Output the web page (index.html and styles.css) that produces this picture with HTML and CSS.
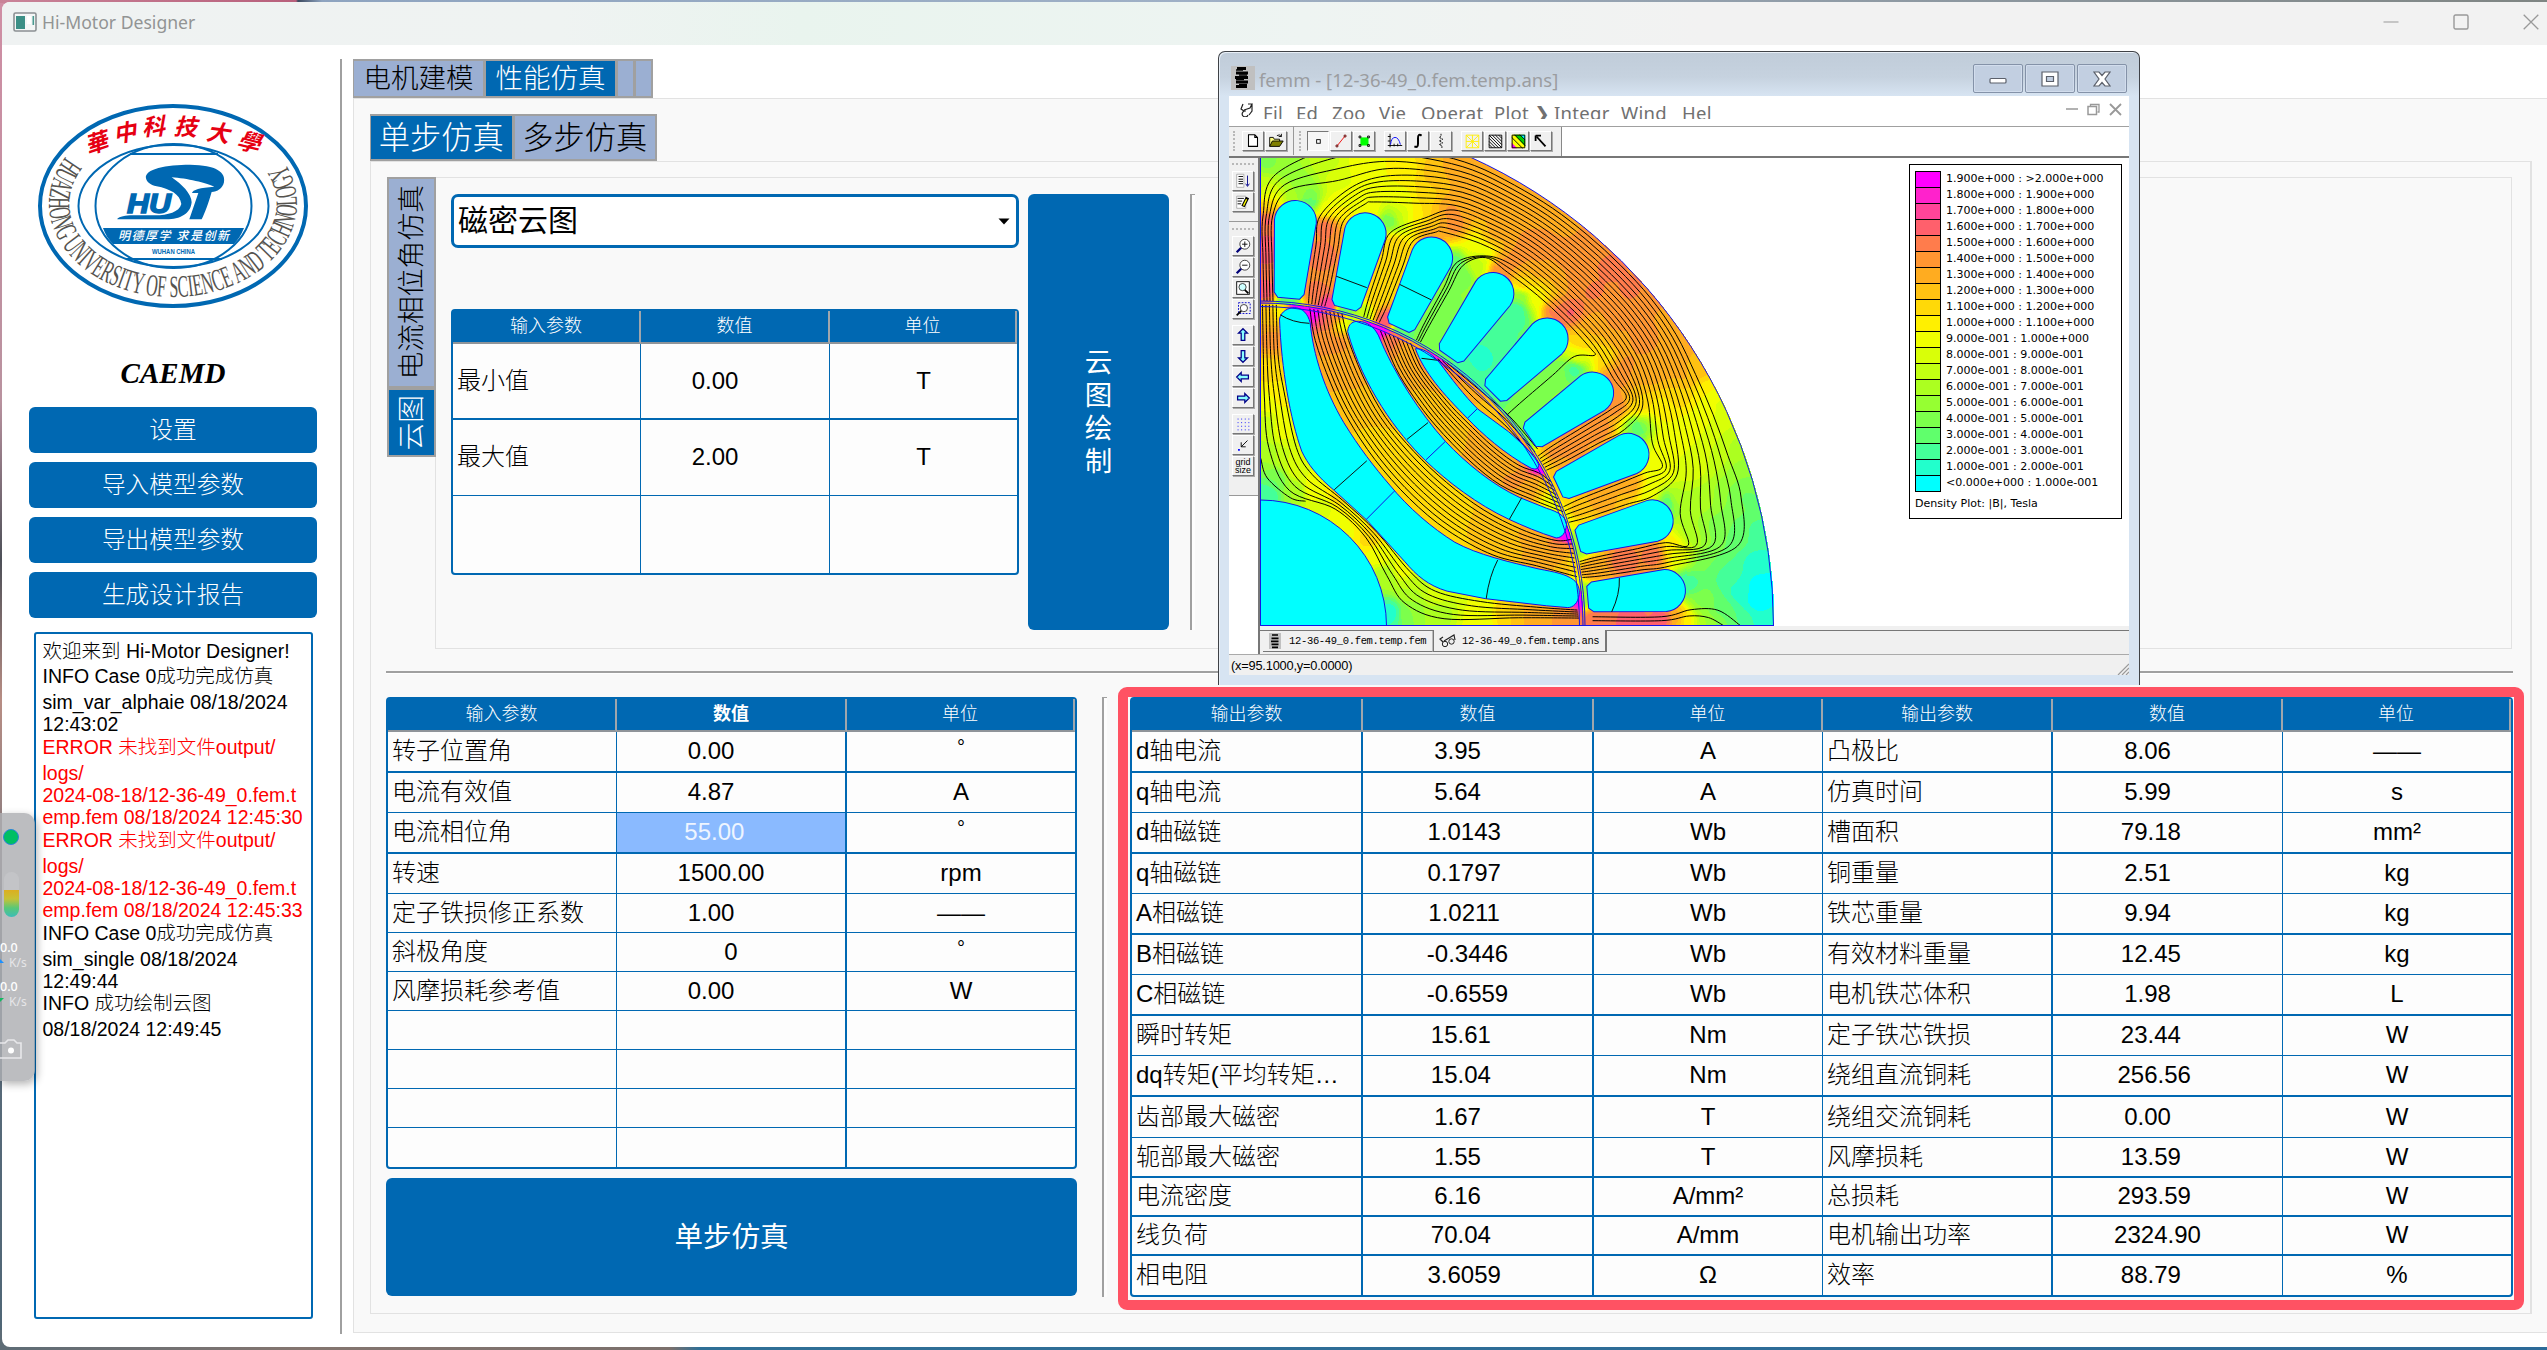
FILE: index.html
```html
<!DOCTYPE html>
<html lang="zh-CN">
<head>
<meta charset="utf-8">
<title>Hi-Motor Designer</title>
<link rel="stylesheet" href="styles.css">
</head>
<body>
<div class="window">
  <header class="titlebar">
    <svg class="app-icon" width="24" height="20" viewBox="0 0 24 20"><rect x="1" y="1" width="22" height="18" rx="1.5" fill="#f4f6f6" stroke="#8a8f92" stroke-width="1.6"/><rect x="3" y="4" width="9" height="13" fill="#3c8f86"/><rect x="14" y="4" width="4" height="8" fill="#fff"/><rect x="19.5" y="4" width="1.6" height="9" fill="#4a9a90"/></svg>
    <span class="app-title">Hi-Motor Designer</span>
    <div class="win-controls">
      <svg width="16" height="16" viewBox="0 0 16 16"><path d="M.5 8H15.5" stroke="#999"/></svg>
      <svg width="16" height="16" viewBox="0 0 16 16"><rect x="1" y="1" width="14" height="14" rx="1.5" fill="none" stroke="#999" stroke-width="1.4"/></svg>
      <svg width="16" height="16" viewBox="0 0 16 16"><path d="M.7 .7L15.3 15.3M15.3 .7L.7 15.3" stroke="#999" stroke-width="1.3"/></svg>
    </div>
  </header>
  <div class="content">
    <aside class="sidebar">
      <svg class="logo" width="272" height="206" viewBox="-1 -1 272 206">
        <defs><path id="ring" d="M29,51 A124,93.500 0 1 0 241,51"/></defs>
        <ellipse cx="135" cy="102" rx="133" ry="100" fill="#fff" stroke="#0068b2" stroke-width="4"/>
        <text class="ring-text"><textPath href="#ring" startOffset="2" textLength="436" lengthAdjust="spacingAndGlyphs">HUAZHONG UNIVERSITY OF SCIENCE AND TECHNOLOGY</textPath></text>
        <g class="ring-cn">
          <text transform="translate(61 47) rotate(-18) skewX(-14)">華</text>
          <text transform="translate(88 37) rotate(-10) skewX(-14)">中</text>
          <text transform="translate(116 31) rotate(-4) skewX(-14)">科</text>
          <text transform="translate(147 31) rotate(3) skewX(-14)">技</text>
          <text transform="translate(179 37) rotate(8) skewX(-14)">大</text>
          <text transform="translate(209 46) rotate(14) skewX(-14)">學</text>
        </g>
        <g fill="none" stroke="#0068b2" stroke-width="2">
          <ellipse cx="135.500" cy="102" rx="95" ry="61"/><ellipse cx="135.500" cy="102" rx="78" ry="62"/>
          <path d="M92 50H180M88 155H184"/>
        </g>
        <path d="M65 124H206C203 131 200 136 196 140H75C70 135 67 130 65 124Z" fill="#0068b2"/>
        <text x="80" y="136" class="motto" textLength="111">明德厚学 求是创新</text>
        <text x="114" y="150" class="city" textLength="43" lengthAdjust="spacingAndGlyphs">WUHAN CHINA</text>
        <path transform="translate(-18 -15) scale(.3333)" d="M378 268C372 240 440 227 510 227C590 228 618 250 612 280C608 298 592 309 575 309C565 345 555 370 545 391H508L535 312H516C518 302 540 296 583 293C560 282 500 268 455 265C485 285 515 315 515 340C512 375 480 391 440 391H292C292 386 310 380 330 379H400C440 380 478 370 484 345C480 315 450 300 410 292C390 288 380 278 378 268Z" fill="#0068b2"/>
        <text x="89" y="109" class="hust" textLength="44" lengthAdjust="spacingAndGlyphs">HU</text>
      </svg>
      <div class="brand">CAEMD</div>
      <nav class="side-buttons">
        <button class="btn">设置</button>
        <button class="btn">导入模型参数</button>
        <button class="btn">导出模型参数</button>
        <button class="btn">生成设计报告</button>
      </nav>
      <div class="log">
        <p class="cn">欢迎来到 Hi-Motor Designer!</p>
        <p class="cn">INFO Case 0成功完成仿真</p>
        <p>sim_var_alphaie 08/18/2024</p>
        <p>12:43:02</p>
        <p class="cn err">ERROR 未找到文件output/</p>
        <p class="err">logs/</p>
        <p class="err">2024-08-18/12-36-49_0.fem.t</p>
        <p class="err">emp.fem 08/18/2024 12:45:30</p>
        <p class="cn err">ERROR 未找到文件output/</p>
        <p class="err">logs/</p>
        <p class="err">2024-08-18/12-36-49_0.fem.t</p>
        <p class="err">emp.fem 08/18/2024 12:45:33</p>
        <p class="cn">INFO Case 0成功完成仿真</p>
        <p>sim_single 08/18/2024</p>
        <p>12:49:44</p>
        <p class="cn">INFO 成功绘制云图</p>
        <p>08/18/2024 12:49:45</p>
      </div>
    </aside>
    <main class="main">
      <div class="tabs tabs-main">
        <span class="tab">电机建模</span><span class="tab on">性能仿真</span><span class="tab mini"></span><span class="tab mini"></span>
      </div>
      <div class="pane pane-outer">
        <div class="tabs tabs-sub">
          <span class="tab on">单步仿真</span><span class="tab">多步仿真</span>
        </div>
        <div class="pane pane-inner">
          <div class="upper">
            <div class="vtabs">
              <span class="vtab v1"><i>电流相位角仿真</i></span><span class="vtab v2 on"><i>云图</i></span>
            </div>
            <div class="pane pane-plot">
              <div class="plot-form">
                <div class="combo"><span>磁密云图</span><svg width="12" height="7" viewBox="0 0 12 7"><path d="M.5 .5H11.500L6 6.500Z"/></svg></div>
                <table class="grid grid-range">
                  <colgroup><col style="width:188px"><col style="width:189px"><col></colgroup>
                  <thead><tr><th>输入参数</th><th>数值</th><th>单位</th></tr></thead>
                  <tbody>
                    <tr><td>最小值</td><td class="num">0.00      </td><td class="unit">T</td></tr>
                    <tr><td>最大值</td><td class="num">2.00      </td><td class="unit">T</td></tr>
                    <tr><td></td><td></td><td></td></tr>
                  </tbody>
                </table>
              </div>
              <button class="btn btn-draw"><span>云</span><span>图</span><span>绘</span><span>制</span></button>
              <div class="vline"></div>
            </div>
          </div>
          <div class="hline"></div>
          <div class="lower">
            <div class="left-col">
              <table class="grid grid-in">
                <colgroup><col style="width:229px"><col style="width:230px"><col></colgroup>
                <thead><tr><th>输入参数</th><th class="strong">数值</th><th>单位</th></tr></thead>
                <tbody>
                  <tr><td>转子位置角</td><td class="num">0.00      </td><td class="unit deg">°</td></tr>
                  <tr><td>电流有效值</td><td class="num">4.87      </td><td class="unit">A</td></tr>
                  <tr><td>电流相位角</td><td class="num sel">55.00     </td><td class="unit deg">°</td></tr>
                  <tr><td>转速</td><td class="num">1500.00   </td><td class="unit">rpm</td></tr>
                  <tr><td>定子铁损修正系数</td><td class="num">1.00      </td><td class="unit">——</td></tr>
                  <tr><td>斜极角度</td><td class="num">0</td><td class="unit deg">°</td></tr>
                  <tr><td>风摩损耗参考值</td><td class="num">0.00      </td><td class="unit">W</td></tr>
                  <tr><td></td><td></td><td></td></tr>
                  <tr><td></td><td></td><td></td></tr>
                  <tr><td></td><td></td><td></td></tr>
                  <tr><td></td><td></td><td></td></tr>
                </tbody>
              </table>
              <button class="btn btn-run">单步仿真</button>
            </div>
            <div class="vline"></div>
            <div class="results">
              <table class="grid grid-out">
                <colgroup><col style="width:231px"><col style="width:231px"><col style="width:229px"><col style="width:230px"><col style="width:230px"><col></colgroup>
                <thead><tr><th>输出参数</th><th>数值</th><th>单位</th><th>输出参数</th><th>数值</th><th>单位</th></tr></thead>
                <tbody>
                  <tr><td>d轴电流</td><td class="num">3.95      </td><td class="unit">A</td><td>凸极比</td><td class="num">8.06      </td><td class="unit">——</td></tr>
                  <tr><td>q轴电流</td><td class="num">5.64      </td><td class="unit">A</td><td>仿真时间</td><td class="num">5.99      </td><td class="unit">s</td></tr>
                  <tr><td>d轴磁链</td><td class="num">1.0143    </td><td class="unit">Wb</td><td>槽面积</td><td class="num">79.18     </td><td class="unit">mm²</td></tr>
                  <tr><td>q轴磁链</td><td class="num">0.1797    </td><td class="unit">Wb</td><td>铜重量</td><td class="num">2.51      </td><td class="unit">kg</td></tr>
                  <tr><td>A相磁链</td><td class="num">1.0211    </td><td class="unit">Wb</td><td>铁芯重量</td><td class="num">9.94      </td><td class="unit">kg</td></tr>
                  <tr><td>B相磁链</td><td class="num">-0.3446   </td><td class="unit">Wb</td><td>有效材料重量</td><td class="num">12.45     </td><td class="unit">kg</td></tr>
                  <tr><td>C相磁链</td><td class="num">-0.6559   </td><td class="unit">Wb</td><td>电机铁芯体积</td><td class="num">1.98      </td><td class="unit">L</td></tr>
                  <tr><td>瞬时转矩</td><td class="num">15.61     </td><td class="unit">Nm</td><td>定子铁芯铁损</td><td class="num">23.44     </td><td class="unit">W</td></tr>
                  <tr><td>dq转矩(平均转矩…</td><td class="num">15.04     </td><td class="unit">Nm</td><td>绕组直流铜耗</td><td class="num">256.56    </td><td class="unit">W</td></tr>
                  <tr><td>齿部最大磁密</td><td class="num">1.67      </td><td class="unit">T</td><td>绕组交流铜耗</td><td class="num">0.00      </td><td class="unit">W</td></tr>
                  <tr><td>轭部最大磁密</td><td class="num">1.55      </td><td class="unit">T</td><td>风摩损耗</td><td class="num">13.59     </td><td class="unit">W</td></tr>
                  <tr><td>电流密度</td><td class="num">6.16      </td><td class="unit">A/mm²</td><td>总损耗</td><td class="num">293.59    </td><td class="unit">W</td></tr>
                  <tr><td>线负荷</td><td class="num">70.04     </td><td class="unit">A/mm</td><td>电机输出功率</td><td class="num">2324.90   </td><td class="unit">W</td></tr>
                  <tr><td>相电阻</td><td class="num">3.6059    </td><td class="unit">Ω</td><td>效率</td><td class="num">88.79     </td><td class="unit">%</td></tr>
                </tbody>
              </table>
              <div class="highlight"></div>
            </div>
          </div>
        </div>
      </div>
    </main>
  </div>
</div>

<section class="femm">
  <header class="femm-title">
    <svg width="24" height="24" viewBox="0 0 24 24"><rect width="24" height="24" fill="#c0c0c0"/><path d="M6 2.500H15M5 7H17M4 11.500H17M5 16H17M5 20.500H16" stroke="#000" stroke-width="3.200"/><path d="M5 4H12M8 9H16M5 13.500H13M8 18.500H16" stroke="#000" stroke-width="1.500"/></svg>
    <span class="femm-name">femm - [12-36-49_0.fem.temp.ans]</span>
    <div class="caption-buttons">
      <span><svg width="18" height="14" viewBox="0 0 18 14"><rect x="1" y="6.500" width="16" height="4.500" rx="1" fill="#fff" stroke="#5b606b" stroke-width="1.200"/></svg></span>
      <span><svg width="18" height="16" viewBox="0 0 18 16"><path fill-rule="evenodd" d="M1 1H17V15H1ZM5.500 5.500V10.500H12.500V5.500Z" fill="#fff" stroke="#5b606b" stroke-width="1.200"/></svg></span>
      <span><svg width="18" height="16" viewBox="0 0 18 16"><path d="M1 1H6L9 4.500L12 1H17L12 8L17 15H12L9 11.500L6 15H1L6 8Z" fill="#fff" stroke="#5b606b" stroke-width="1.200"/></svg></span>
    </div>
  </header>
  <div class="femm-client">
    <div class="menubar">
      <svg class="menu-icon" width="13" height="14" viewBox="0 0 13 14"><path d="M3 1L1 6L4 8M4 7L10 5L12 1L8 1M12 1V8L9 12M6 8A3 3 0 1 0 8 12" fill="none" stroke="#222" stroke-width="1.200"/></svg>
      <div class="menu-items"><span style="width:33px">Fil</span><span style="width:36px">Ed</span><span style="width:47px">Zoo</span><span style="width:42px">Vie</span><span style="width:73px">Operat</span><span style="width:60px">Plot ❯</span><span style="width:67px">Integr</span><span style="width:61px">Wind</span><span style="width:40px">Hel</span></div>
      <svg class="mdi" width="56" height="14" viewBox="0 0 56 14"><path d="M0 6H12" stroke="#999" stroke-width="1.500"/><path d="M24.500 3V1.500H33V9H31.500" fill="none" stroke="#999" stroke-width="1.300"/><rect x="22" y="3.500" width="8.500" height="8" fill="none" stroke="#999" stroke-width="1.500"/><path d="M44 1L55 12M55 1L44 12" stroke="#999" stroke-width="1.800"/></svg>
    </div>
    <div class="toolbar">
      <div class="tools">
        <i class="grip"></i>
        <b class="tb"><svg viewBox="0 0 20 20"><path d="M5 3H12L15 6V16H5ZM12 3V6H15" fill="#fff" stroke="#000" stroke-width="1.200"/></svg></b>
        <b class="tb"><svg viewBox="0 0 20 20"><path d="M3 16V6H7L8 8H14V10" fill="#ffff80" stroke="#000"/><path d="M3 16L6 10H18L14 16Z" fill="#808000" stroke="#000"/><path d="M11 4Q14 2 16 5M16 2V5H13" fill="none" stroke="#000"/></svg></b>
        <i class="tsep"></i><i class="grip g2"></i>
        <b class="tb down"><svg viewBox="0 0 20 20"><rect x="8.500" y="8.500" width="4" height="4" fill="#fff" stroke="#000"/></svg></b>
        <b class="tb"><svg viewBox="0 0 20 20"><path d="M6 15L14 5" stroke="#e00"/><path d="M4.500 14.500h2v2h-2zM13.500 3.500h2v2h-2z" stroke="#600"/></svg></b>
        <b class="tb"><svg viewBox="0 0 20 20"><rect x="6" y="6" width="9" height="9" fill="#0f0"/><path d="M4.500 4.500h2v2h-2zM14 4.500h2v2h-2zM4.500 14h2v2h-2zM14 14h2v2h-2z" fill="none" stroke="#000"/></svg></b>
        <i class="gap"></i>
        <b class="tb"><svg viewBox="0 0 20 20"><path d="M4.500 2V17M2 15H18M2 5H5M2 10H5M9 13V16M13 13V16" stroke="#000"/><path d="M5 14Q6 6 10 6Q14 6 16 14" fill="none" stroke="#00f"/></svg></b>
        <b class="tb"><svg viewBox="0 0 20 20"><path d="M14 4Q10 1 10 7V13Q10 18 6 16" fill="none" stroke="#000" stroke-width="2.200"/></svg></b>
        <b class="tb"><svg viewBox="0 0 20 20"><path d="M10 2V5L8 6L12 8L8 10L12 12L8 14L11 15V18" fill="none" stroke="#000" stroke-dasharray="2 1"/></svg></b>
        <i class="gap"></i>
        <b class="tb"><svg viewBox="0 0 20 20"><path d="M3.500 3.500H17.500V17.500H3.500ZM10.500 3.500V17.500M3.500 10.500H17.500M3.500 3.500L17.500 17.500M17.500 3.500L3.500 17.500" fill="none" stroke="#fe0"/></svg></b>
        <b class="tb"><svg viewBox="0 0 20 20"><path d="M3.500 3.500H17.500V17.500H3.500ZM3.500 3.500L17.500 17.500M7 3.500L17.500 14M10.500 3.500L17.500 10.500M14 3.500L17.500 7M3.500 7L14 17.500M3.500 10.500L10.500 17.500M3.500 14L7 17.500" fill="none" stroke="#000"/></svg></b>
        <b class="tb"><svg viewBox="0 0 20 20"><rect x="3" y="3" width="15" height="15" fill="#ff0"/><path d="M3 12V18H9Z" fill="#f0f"/><path d="M12 3H18V10Z" fill="#0ff"/><path d="M6 3H12L18 10V16Z" fill="#0c0"/><path d="M3 6L15 18M6 3L18 15M12 3L18 9M3.500 3.500H17.500V17.500H3.500Z" fill="none" stroke="#000"/></svg></b>
        <b class="tb"><svg viewBox="0 0 20 20"><path d="M5 5L15 16" stroke="#000" stroke-width="2"/><path d="M4 4H10M4 4V10" stroke="#000" stroke-width="2"/></svg></b>
      </div>
    </div>
    <div class="work">
      <div class="side-tools">
        <i class="hgrip"></i>
        <b class="tb"><svg viewBox="0 0 20 20"><path d="M3 2.500H11V17H3Z" fill="#fff" stroke="#aaa"/><path d="M5 5H10M5 8H10M5 10.500H10M5 13H10" stroke="#000"/><path d="M15 4V15M13 13L15 16L17 13" fill="none" stroke="#008"/></svg></b>
        <b class="tb"><svg viewBox="0 0 20 20"><path d="M3 3.500H13V17H3Z" fill="#fff" stroke="#aaa"/><path d="M4 6H11M4 9H9M4 12H8" stroke="#000"/><path d="M10 15L15 5" stroke="#000" stroke-width="4"/><path d="M10.500 14L14 7" stroke="#ff0" stroke-width="1.500"/></svg></b>
        <i class="hsep"></i><i class="hgrip"></i>
        <b class="tb"><svg viewBox="0 0 20 20"><circle cx="12" cy="8" r="5.500" fill="#fff" stroke="#333"/><path d="M9 8H15M12 5V11" stroke="#000"/><path d="M8 12L3 17" stroke="#007" stroke-width="2.500"/></svg></b>
        <b class="tb"><svg viewBox="0 0 20 20"><circle cx="12" cy="8" r="5.500" fill="#fff" stroke="#333"/><path d="M9 8H15" stroke="#000"/><path d="M8 12L3 17" stroke="#007" stroke-width="2.500"/></svg></b>
        <b class="tb"><svg viewBox="0 0 20 20"><rect x="3" y="3" width="14" height="14" fill="#fff" stroke="#000"/><circle cx="9.500" cy="9" r="4" fill="#cff" stroke="#333"/><path d="M12 12L16 16" stroke="#000" stroke-width="2"/></svg></b>
        <b class="tb"><svg viewBox="0 0 20 20"><rect x="5" y="3" width="13" height="12" fill="none" stroke="#00c" stroke-dasharray="2 1.500"/><circle cx="11" cy="9" r="4" fill="#fff" stroke="#333"/><path d="M8 12L3 17" stroke="#000" stroke-width="2"/></svg></b>
        <i class="hgap"></i>
        <b class="tb"><svg viewBox="0 0 20 20"><path d="M10 3L15 8H12V16H8V8H5Z" fill="#8ff" stroke="#008" stroke-width="1.400"/></svg></b>
        <b class="tb"><svg viewBox="0 0 20 20"><path d="M10 17L15 12H12V4H8V12H5Z" fill="#8ff" stroke="#008" stroke-width="1.400"/></svg></b>
        <b class="tb"><svg viewBox="0 0 20 20"><path d="M3 10L8 5V8H16V12H8V15Z" fill="#8ff" stroke="#008" stroke-width="1.400"/></svg></b>
        <b class="tb"><svg viewBox="0 0 20 20"><path d="M17 10L12 5V8H4V12H12V15Z" fill="#8ff" stroke="#008" stroke-width="1.400"/></svg></b>
        <i class="hgap"></i>
        <b class="tb"><svg viewBox="0 0 20 20"><path d="M4 4.500H18M4 8.500H18M4 12.500H18M4 16.500H18" stroke="#00f" stroke-dasharray="1 3"/></svg></b>
        <b class="tb"><svg viewBox="0 0 20 20"><path d="M15 5L8 12M8 7V12H13" fill="none" stroke="#000"/><path d="M4.500 14.500h2v2h-2z" fill="#00f"/></svg></b>
        <b class="tb grid-size">grid<br>size</b>
      </div>
      <div class="view">
        <div class="plot">
          <canvas id="field" width="867" height="468"></canvas>
          <svg class="shapes" width="867" height="468" viewBox="0 0 867 468">
            <defs><path id="slot" d="M329 -11L334 -15L406 -21A21 21 0 0 1 406 21L334 15L329 11Z"/></defs>
            <g fill="none" stroke="#1414e6" stroke-width="1">
              <g fill="#0ff">
                <path d="M.5 342A126.200 126.200 0 0 1 126.500 467.500H.5Z"/>
                <g transform="translate(0 468)">
                  <use href="#slot" transform="rotate(-5)"/><use href="#slot" transform="rotate(-15)"/><use href="#slot" transform="rotate(-25)"/>
                  <use href="#slot" transform="rotate(-35)"/><use href="#slot" transform="rotate(-45)"/><use href="#slot" transform="rotate(-55)"/>
                  <use href="#slot" transform="rotate(-65)"/><use href="#slot" transform="rotate(-75)"/><use href="#slot" transform="rotate(-85)"/>
                </g>
                <g class="cavities" transform="scale(.3827 .3571) translate(-131 -49)">
                  <path d="M182 500C186 478 205 468 222 468C244 470 256 486 262 510C270 600 300 700 350 790C390 860 430 915 470 965C520 1030 580 1085 640 1125C700 1160 780 1180 860 1200C900 1208 930 1214 950 1230C964 1242 966 1258 965 1272C962 1295 950 1308 935 1308L880 1303L720 1283L620 1262C570 1246 540 1218 510 1180L410 1063L325 980C280 940 255 905 240 870C210 780 187 640 182 500Z"/>
                  <path d="M360 535C362 512 375 506 388 506C410 508 428 520 440 545C480 650 550 765 615 842C670 905 740 965 810 1000L880 1030C912 1040 932 1055 932 1075C930 1100 920 1112 905 1113C860 1098 820 1080 780 1060C700 1020 620 955 562 895C490 820 400 690 360 535Z"/>
                  <path d="M537 583C556 582 575 592 600 622C630 665 665 715 700 752L780 815C820 852 850 885 858 905C862 920 852 922 840 918C770 878 710 820 673 778C610 710 560 650 537 583Z"/>
                </g>
              </g>
              <g class="cavities" transform="scale(.3827 .3571) translate(-131 -49)">
                <path d="M482 982L408 1062M615 843L565 894M698 752L673 778"/>
                <path stroke="#111" d="M410 897L325 978M752 1175Q730 1220 722 1283M570 790L515 837M815 1000L783 1060M184 488Q215 510 260 512M330 380L410 412M496 403L578 446M1070 1225Q1072 1270 1050 1320M553 610L600 616"/>
              </g>
              <path d="M0 145A323 323 0 0 1 323 468M0 148.500A319.500 319.500 0 0 1 319.500 468M0 143A325 325 0 0 1 325 468M.5 0V467.500H514M210 -1A514 514 0 0 1 513.500 468"/>
            </g>
          </svg>
          <div class="legend">
            <div class="legend-row"><i style="background:#ff00ff"></i>1.900e+000 : &gt;2.000e+000</div>
            <div class="legend-row"><i style="background:#ff22cc"></i>1.800e+000 : 1.900e+000</div>
            <div class="legend-row"><i style="background:#ff4499"></i>1.700e+000 : 1.800e+000</div>
            <div class="legend-row"><i style="background:#ff606c"></i>1.600e+000 : 1.700e+000</div>
            <div class="legend-row"><i style="background:#ff7c4c"></i>1.500e+000 : 1.600e+000</div>
            <div class="legend-row"><i style="background:#ff9632"></i>1.400e+000 : 1.500e+000</div>
            <div class="legend-row"><i style="background:#ffac20"></i>1.300e+000 : 1.400e+000</div>
            <div class="legend-row"><i style="background:#ffc212"></i>1.200e+000 : 1.300e+000</div>
            <div class="legend-row"><i style="background:#ffd908"></i>1.100e+000 : 1.200e+000</div>
            <div class="legend-row"><i style="background:#fff000"></i>1.000e+000 : 1.100e+000</div>
            <div class="legend-row"><i style="background:#f0ff00"></i>9.000e-001 : 1.000e+000</div>
            <div class="legend-row"><i style="background:#d9ff08"></i>8.000e-001 : 9.000e-001</div>
            <div class="legend-row"><i style="background:#c2ff12"></i>7.000e-001 : 8.000e-001</div>
            <div class="legend-row"><i style="background:#acff20"></i>6.000e-001 : 7.000e-001</div>
            <div class="legend-row"><i style="background:#96ff32"></i>5.000e-001 : 6.000e-001</div>
            <div class="legend-row"><i style="background:#7cff4c"></i>4.000e-001 : 5.000e-001</div>
            <div class="legend-row"><i style="background:#60ff6c"></i>3.000e-001 : 4.000e-001</div>
            <div class="legend-row"><i style="background:#44ff99"></i>2.000e-001 : 3.000e-001</div>
            <div class="legend-row"><i style="background:#22ffcc"></i>1.000e-001 : 2.000e-001</div>
            <div class="legend-row"><i style="background:#00ffff"></i>&lt;0.000e+000 : 1.000e-001</div>
            <div class="legend-title">Density Plot: |B|, Tesla</div>
          </div>
        </div>
        <div class="doc-tabs">
          <span class="doc"><svg width="12" height="16" viewBox="0 0 24 24" preserveAspectRatio="none"><rect width="24" height="24" fill="#c0c0c0"/><path d="M6 3H18M5 8H19M4 12.500H19M5 17H19M6 21.500H18" stroke="#000" stroke-width="2.500"/></svg>12-36-49_0.fem.temp.fem</span>
          <span class="doc active"><svg width="17" height="14" viewBox="0 0 17 14"><path d="M4 8L1 5L4 3M5 7L10 4L15 1L16 6" fill="none" stroke="#222" stroke-width="1.200"/><circle cx="6" cy="10" r="2.700" fill="#eee" stroke="#222"/><circle cx="12.500" cy="7.500" r="2.700" fill="#eee" stroke="#222"/></svg>12-36-49_0.fem.temp.ans</span>
        </div>
      </div>
    </div>
    <div class="status">(x=95.1000,y=0.0000)<svg width="12" height="12" viewBox="0 0 12 12"><path d="M1 12L12 1M5 12L12 5M9 12L12 9" stroke="#999" stroke-width="1.200"/></svg></div>
  </div>
</section>

<div class="monitor">
  <i class="dot"></i>
  <i class="level"></i>
  <div class="net"><b>0.0</b><span><em class="up"></em>K/s</span></div>
  <div class="net"><b>0.0</b><span><em class="dn"></em>K/s</span></div>
  <svg class="cam" width="22" height="20" viewBox="0 0 22 20"><path d="M-2 4H5L8 1H14L17 4H21V19H-2" fill="none" stroke="#e8e8ea" stroke-width="1.600"/><circle cx="11" cy="11.500" r="3" fill="#fff"/></svg>
</div>
<script src="field.js"></script>
</body>
</html>
```

FILE: styles.css
```css
* { box-sizing: border-box; }
body {
  margin: 0; width: 2547px; height: 1350px; overflow: hidden; position: relative;
  padding: 2px 0 3px 2px;
  font-family: "Liberation Sans", "Noto Sans CJK SC", sans-serif; font-weight: 300; color: #000;
  background: linear-gradient(90deg, #c98398 0, #b8607c 296px, #3c4a60 298px, #8ea4c0 322px, #9fb0c6 1200px, #7f8583 2547px) top / 100% 3px no-repeat,
    linear-gradient(90deg, #5d6c76 0, #84756f 300px, #7b706c 670px, #2f6f96 700px, #2c6a98 2547px) bottom / 100% 20px no-repeat,
    linear-gradient(#cf8ea4, #b9929f 400px, #4d5058 560px, #b78d84 700px, #5a6b7a 1000px, #4f6676) left / 20px 100% no-repeat;
}
p { margin: 0; }
button { font: inherit; border: 0; padding: 0; }

.window { height: 1345px; background: #fff; border-radius: 8px 0 0 8px; overflow: hidden; display: flex; flex-direction: column; }
.titlebar { height: 43px; display: flex; align-items: center; padding: 0 8px 3px 11px; background: linear-gradient(90deg, #eff2f2 0, #eff3f2 560px, #e9f4ee 800px, #eef4f2 1300px, #f2f2f2 1700px); }
.app-title { font: 400 17.6px "Noto Sans", sans-serif; color: #929494; margin-left: 5px; flex: 1; }
.win-controls { display: flex; gap: 54px; }
.content { flex: 1; display: flex; }

.sidebar { width: 340px; margin: 14px 0 13px; border-right: 2px solid #a0a0a0; padding: 44px 23px 0 27px; display: flex; flex-direction: column; }
.logo { margin-left: 8px; flex: none; overflow: visible; }
.ring-text { font: 400 31px "Liberation Serif", serif; fill: #55534f; }
.ring-cn { font: 700 23px "Noto Sans CJK TC", sans-serif; fill: #e60012; text-anchor: middle; }
.motto { font: italic 500 12px "Noto Sans CJK SC", sans-serif; fill: #fff; }
.city { font: 700 8px "Liberation Sans", sans-serif; fill: #0068b2; }
.hust { font: italic 700 27px "Liberation Sans", sans-serif; fill: #0068b2; stroke: #0068b2; stroke-width: 1.500px; }
.brand { font: italic 700 29px/34px "Liberation Serif", serif; text-align: center; margin-top: 47px; }
.side-buttons { display: flex; flex-direction: column; gap: 9px; margin-top: 17px; }
.btn { background: #0068b2; color: #fff; border-radius: 6px; font-weight: 300; }
.side-buttons .btn { height: 46px; font-size: 23.700px; line-height: 44px; }
.log { margin: 14px 4px 15px 5px; flex: 1; border: 2.500px solid #0068b2; border-radius: 3px; background: #fff; padding: 5.500px 0 0 6.500px; font-size: 19.500px; line-height: 22px; white-space: nowrap; }
.log p { height: 22.400px; }
.log p.cn { height: 25.800px; }
.log .err { color: #f00; }

.main { flex: 1; padding: 14px 0 14px 11px; display: flex; flex-direction: column; min-width: 0; }
.tabs { display: flex; }
.tab { border: 2px solid #a0a0a0; border-left-width: 1px; background: #9bafd2; display: flex; align-items: center; justify-content: center; }
.tab.on, .vtab.on { background: #0068b2; color: #fff; }
.tabs-main { height: 39px; font-size: 27.500px; line-height: 30px; }
.tabs-main .tab { width: 132px; }
.tabs-main .tab.mini { width: 18px; }
.tabs-sub { height: 47px; font-size: 31.300px; line-height: 34px; }
.tabs-sub .tab { width: 143.500px; padding-top: 2px; }
.pane { background: #f9f9f9; border: 1px solid #e2e2e2; }
.pane-outer { flex: 1; border-right: 0; padding: 15px 15px 18px 16px; display: flex; flex-direction: column; }
.pane-inner { flex: 1; padding: 15px 17px 0 15px; display: flex; flex-direction: column; border-right-width: 2px; }
.upper { display: flex; height: 472px; margin: 0 1px; }
.vtabs { width: 49px; margin-right: -1px; z-index: 1; }
.vtab { width: 49px; border: 2px solid #a0a0a0; background: #9bafd2; display: flex; align-items: center; justify-content: center; }
.vtab i { font-style: normal; writing-mode: vertical-rl; text-orientation: sideways; transform: rotate(180deg); font-size: 27.800px; line-height: 34px; }
.v1 { height: 211px; } .v2 { height: 69px; }
.pane-plot { flex: 1; padding: 16px 0 18px 15px; display: flex; align-items: stretch; gap: 9px; }
.plot-form { width: 568px; }
.combo { height: 54px; border: 3px solid #0068b2; border-radius: 7px; background: #fff; display: flex; align-items: center; justify-content: space-between; padding: 0 6px 0 4px; font-size: 30px; line-height: 40px; font-weight: 400; margin-bottom: 61px; }
.btn-draw { width: 141px; display: flex; flex-direction: column; align-items: center; justify-content: center; font-size: 27.500px; line-height: 33px; font-weight: 400; }
.vline { width: 5px; border-left: 2px solid #a0a0a0; border-top: 1px solid #a0a0a0; background: #fdfdfd; }
.pane-plot .vline { margin-left: 12px; }
.hline { margin: 22px 0 23px; height: 3px; border-top: 2px solid #a0a0a0; background: #fff; }

.grid { table-layout: fixed; border-collapse: separate; border-spacing: 0; border: 2px solid #0068b2; border-radius: 4px; background: #fdfdfd; }
.grid th { background: #0068b2; color: #fff; font-weight: 300; font-size: 18px; line-height: 20px; padding: 0 0 2px; border-right: 2px solid #a0a6ac; border-bottom: 2px solid #8f9499; height: 33px; }
.grid th.strong { font-weight: 700; }
.grid td { padding: 0 0 1px 4px; font-size: 24px; line-height: 28px; border-right: 1px solid #0068b2; border-bottom: 1px solid #0068b2; white-space: nowrap; overflow: hidden; }
.grid td:last-child { border-right: 0; }
.grid tr:last-child td { border-bottom: 0; }
.grid .num { text-align: center; white-space: pre; padding-left: 0; }
.grid .unit { text-align: center; padding-left: 0; }
.grid .deg { font-size: 20px; padding-bottom: 9px; }
.grid .sel { background: #8abaff; color: #eef5ff; }
.grid-range { width: 568px; height: 266px; }
.grid-range tbody td { height: 76px; }
.grid-range tbody tr:first-child td { border-bottom-width: 2px; }
.grid-range tbody tr:last-child td { height: 77px; }

.lower { display: flex; }
.left-col { width: 691px; display: flex; flex-direction: column; gap: 9px; }
.grid-in { width: 691px; height: 472px; }
.grid-in tbody td { height: 39px; }
.grid-in tbody tr:nth-child(1) td, .grid-in tbody tr:nth-child(3) td { height: 41px; border-bottom-width: 2px; }
.grid-in tbody tr:nth-child(2) td, .grid-in tbody tr:nth-child(4) td { height: 40px; }
.grid-in td:nth-child(2) { border-right-width: 2px; }
.btn-run { height: 118px; font-size: 28.500px; font-weight: 400; line-height: 110px; }
.lower .vline { margin-left: 25px; height: 600px; }
.results { position: relative; margin-left: 23px; }
.grid-out { width: 1383px; height: 600px; }
.grid-out tbody td { height: 40px; }
.grid-out tbody tr:nth-child(odd) td { height: 41px; border-bottom-width: 2px; }
.grid-out tbody tr:nth-child(10) td { height: 41px; }
.grid-out tbody tr:nth-child(11) td { height: 40px; }
.grid-out tbody tr:nth-child(12) td, .grid-out tbody tr:nth-child(13) td { height: 39px; border-bottom-width: 2px; }
.grid-out tbody tr:last-child td { height: 39px; border-bottom-width: 0; }
.grid-out td:nth-child(1), .grid-out td:nth-child(2), .grid-out td:nth-child(4) { border-right-width: 2px; }
.highlight { position: absolute; inset: -10.500px -11px -13px -12.500px; border: 10.500px solid #ff5263; border-radius: 9px; }

/* floating simulation window */
.femm { position: absolute; left: 1218px; top: 51px; width: 922px; height: 634px; border: 1px solid #3f4247; border-bottom: 0; border-radius: 7px 7px 0 0; background: linear-gradient(#c0ccd9 0, #c6d2df 25px, #d7e4f2 44px); padding: 0 10px 10px; box-shadow: inset 1px 1px 0 #e8eff7; overflow: hidden; }
.femm-title { height: 44px; display: flex; align-items: flex-start; padding: 14px 2px 0 2px; }
.femm-name { font: 400 18.550px/24px "Noto Sans", sans-serif; color: #9b9da0; margin: 2px 0 0 4px; flex: 1; white-space: nowrap; }
.caption-buttons { display: flex; gap: 2px; margin-top: -2px; }
.caption-buttons span { width: 50px; height: 29px; border: 1px solid #8492a8; border-radius: 2px; box-shadow: inset 0 0 0 1px #d2dded; display: flex; align-items: center; justify-content: center; background: #c2cfe1; }
.femm-client { height: 579px; background: #f0f0f0; display: flex; flex-direction: column; }
.menubar { height: 31px; background: #fff; border-bottom: 1px solid #a0a0a0; display: flex; align-items: flex-start; padding-left: 11px; }
.menu-icon { margin-top: 7px; }
.menu-items { flex: 1; margin-left: 10px; height: 23px; overflow: hidden; display: flex; font: 400 18.500px/34px "Noto Sans", "DejaVu Sans", sans-serif; color: #707070; letter-spacing: .3px; }
.menu-items span { display: block; white-space: nowrap; }
.mdi { margin: 7px 7px 0 0; }
.toolbar { height: 31px; background: #fff; border-bottom: 2px solid #777; }
.tools { width: 333px; height: 29px; background: #f0f0f0; border-right: 1px solid #888; display: flex; align-items: center; padding: 0 0 2px 4px; }
.tb { width: 22px; height: 20px; flex: none; margin-right: 1px; background: #f0f0f0; border: 1px solid; border-color: #fff #777 #777 #fff; box-shadow: 1px 1px 0 #aaa; display: flex; align-items: center; justify-content: center; }
.tb svg { width: 18px; height: 18px; fill: none; }
.tb.down { border-color: #777 #fff #fff #777; background: #f6f6f6; box-shadow: none; }
.grip { width: 3px; height: 20px; border-left: 2px dotted #b8b8b8; margin-right: 6px; }
.g2 { margin-left: 5px; margin-right: 5px; }
.tsep { width: 1px; height: 29px; background: #999; margin-left: 5px; }
.gap { width: 8px; }
.work { flex: 1; display: flex; }
.side-tools { width: 31px; padding: 5px 0 0 3px; border-right: 2px solid #777; background: linear-gradient(#f0f0f0 337px, #999 337px, #999 338px, #fff 338px); display: flex; flex-direction: column; }
.side-tools .tb { margin-bottom: 1px; height: 20px; }
.hgrip { height: 2px; width: 22px; border-top: 2px dotted #b8b8b8; margin-bottom: 6px; }
.hsep { height: 1px; background: #999; margin: 8px 0 6px -3px; }
.hgap { height: 5px; }
.side-tools .grid-size { font: 400 9px/8px "Liberation Sans", sans-serif; text-align: center; display: block; padding-top: 1px; }
.view { flex: 1; display: flex; flex-direction: column; }
.plot { height: 468px; position: relative; background: #fff; }
.plot canvas, .plot .shapes { position: absolute; left: 0; top: 0; display: block; }
.cavities path { vector-effect: non-scaling-stroke; }
.legend { position: absolute; left: 649px; top: 6px; width: 213px; height: 355px; border: 1px solid #000; background: #fff; padding: 6px 0 0 5px; font: 400 11.050px/16px "DejaVu Sans", sans-serif; white-space: nowrap; }
.legend-row { display: flex; height: 16px; }
.legend-row i { width: 26px; height: 17px; border: 1px solid #000; margin-right: 5px; flex: none; }
.legend-title { margin-top: 5px; }
.doc-tabs { flex: 1; display: flex; align-items: flex-start; border-top: 1px solid #777; margin-top: 4px; padding-left: 3px; font: 400 10.500px/18px "Liberation Mono", monospace; letter-spacing: -.33px; }
.doc { height: 21px; display: flex; align-items: center; gap: 8px; width: 170px; padding-left: 6px; border-bottom: 1px solid #777; border-right: 1px solid #bbb; background: #f0f0f0; white-space: nowrap; }
.doc.active { width: 174px; height: 22px; border: 1px solid #777; border-top: 0; border-right-width: 2px; margin-top: -1px; padding-left: 5px; gap: 6px; }
.status { height: 21px; border-top: 1px solid #aaa; display: flex; align-items: center; justify-content: space-between; padding-left: 2px; font-size: 12.800px; letter-spacing: -.2px; }
.status svg { align-self: flex-end; }

/* desktop system monitor docked to the screen edge */
.monitor { position: absolute; left: 0; top: 813px; width: 35px; height: 268px; border-radius: 0 11px 11px 0; background: rgba(173, 174, 178, .82); box-shadow: 2px 3px 8px rgba(0, 0, 0, .3); color: #fff; overflow: hidden; }
.monitor .dot { display: block; width: 16px; height: 16px; border-radius: 50%; margin: 16px 0 0 3px; background: #00bf63; border: 1px solid #2c86d8; }
.monitor .level { display: block; width: 15px; height: 45px; border-radius: 8px; margin: 27px 0 0 4px; background: linear-gradient(#c3c4c7 40%, #dcae20 40%, #c6c236 60%, #58c878 80%, #3cbcb8); }
.net { margin-top: 24px; height: 15px; font: 700 12.500px/14px "Noto Sans", sans-serif; }
.net + .net { margin-top: 24px; }
.net b, .net span { display: block; font-weight: 500; }
.net span { font-weight: 400; font-size: 12px; padding-left: 9px; line-height: 16px; position: relative; color: #e6e6e8; }
.net em { position: absolute; left: -4px; top: 4px; border: 4px solid transparent; }
.net .up { border-bottom-color: #1c90ff; top: 0; }
.net .dn { border-top-color: #12b860; }
.cam { display: block; margin-top: 44px; }
```

FILE: field.js
```javascript
const W = 867, H = 468, OY = 468;
const U = ([x, y]) => [(x - 131) / 2.613, (y - 49) / 2.8];
const palette = ['00ffff','22ffcc','44ff99','60ff6c','7cff4c','96ff32','acff20','c2ff12','d9ff08','f0ff00',
  'fff000','ffd908','ffc212','ffac20','ff9632','ff7c4c','ff606c','ff4499','ff22cc','ff00ff']
  .map(h => [0, 2, 4].map(i => parseInt(h.substr(i, 2), 16)));

const stator = `150,60,.45 135,130,.75 200,80,.55 240,130,.5 300,60,.75 330,110,.85 400,70,.95 450,120,1 520,80,1.08 500,160,.95
590,90,1.3 560,150,1.15 650,70,1.35 620,200,1.45 680,130,1.35 720,180,1.35 760,110,1.35 800,170,1.38 640,240,1.48 690,290,.95
720,320,.85 780,240,1.38 840,290,1.5 800,330,1.45 760,350,1.5 870,230,1.4 920,220,1.38 1000,300,1.44 1040,350,1.53 960,380,1.48
1000,420,1.52 930,330,1.43 940,480,1.65 900,470,1.55 870,420,1.1 850,440,.95 820,400,1.2 1100,420,1.52 1060,500,1.44 1150,470,1.4
1130,560,1.44 1040,600,1.1 960,600,.9 970,560,1.2 1000,520,1.35 1080,620,1.44 1060,660,1.48 1220,560,1.38 1200,620,1.4 1150,650,1.35
1280,640,1.25 1230,720,1.15 1180,750,1.05 1120,740,1.2 1330,740,.88 1300,700,1.0 1250,800,.95 1200,840,.98 1380,860,.65 1320,860,.8
1260,920,.85 1190,930,.95 1150,980,.95 1120,800,.35 1220,1000,.75 1200,1010,.3 1290,1000,.65 1350,1000,.5 1400,1000,.38 1330,1080,.45
1260,1100,.6 1220,1150,.9 1380,1100,.35 1430,1100,.25 1300,1180,.4 1250,1240,.2 1350,1220,.25 1430,1180,.15 1440,1250,.0 1430,1290,.0
1380,1260,.15 1460,1340,.15 1400,1330,.22 1330,1310,.35 1280,1290,.45 1240,1340,1 1300,1345,.6 1350,1345,.4 1340,800,.8 1290,760,.95
1400,930,.5 1240,660,1.32 1180,500,1.4 1070,560,1.4 900,390,1.35 860,360,1.42 880,300,1.42 840,220,1.38 740,260,1.35 580,210,1.2 540,210,1.05
150,220,1.62 150,300,1.65 150,420,1.65 150,180,1.2 150,150,.9 300,240,1.55 290,320,1.55 270,420,1.52 310,190,1 260,165,.3 220,150,.65
350,170,1 480,290,1.15 450,360,1.15 430,440,1.15 470,220,.4 500,210,.8 420,190,1 660,380,.42 620,460,.45 570,540,.42 640,340,.35 700,350,.75
800,500,.25 760,550,.22 700,610,.15 660,640,.3 810,440,.5 800,470,.18 580,260,1.35 760,365,1.5 910,650,.43 850,710,.45 800,760,.42 950,640,.25
1010,800,1.45 940,850,1.45 890,880,1.45 1060,740,1.45 1100,960,1.35 1020,1000,1.35 950,1040,1.3 1160,1160,1.55 1080,1175,1.55 1000,1200,1.4
1210,1140,1.1 1180,1340,1.65 1100,1340,1.65 1010,1340,1.6 1225,1335,1.4 310,460,1.8 460,500,1.7 200,445,.3 350,475,.35 500,525,.3 395,485,.7
870,895,1.1 935,1050,.9 960,1130,.5 985,1270,.5 1150,900,.9 740,700,.25 760,740,.4 830,830,.45`;
const rotor = `145,480,1.3 160,560,1.42 150,640,1.15 150,720,.95 172,700,1.1 150,800,.75 190,800,1 145,880,.6 200,880,.8 170,950,.4 150,990,.2
220,980,.6 230,920,.9 300,1020,.85 270,970,1 350,1080,.9 380,1060,1.1 330,1000,1.15 420,1110,1.15 440,1160,.95 460,1220,.6 500,1200,.95
470,1320,.15 520,1320,.5 520,1260,.7 600,1320,.65 600,1270,.85 700,1310,.9 700,1340,.95 780,1320,1.2 860,1330,1.35 930,1335,1.45 860,1305,1.4
230,462,2 270,482,2 300,500,1.6 340,490,1.55 300,560,1.45 340,560,1.42 310,640,1.35 370,640,1.35 360,750,1.25 420,720,1.28 420,850,1.18
500,880,1.16 540,950,1.15 480,930,1.15 560,1020,1.15 640,1030,1.18 660,1110,1.2 740,1080,1.24 780,1150,1.25 850,1120,1.35 850,1180,1.35
920,1150,1.4 920,1200,1.3 950,1180,1.1 955,1235,.9 425,500,2 445,530,2 470,560,1.5 520,590,1.35 500,640,1.35 550,680,1.3 560,740,1.25
620,760,1.25 640,830,1.28 700,840,1.32 720,900,1.35 790,910,1.38 800,950,1.42 850,960,1.35 830,990,1.32 890,1000,.95 900,1030,.9 870,960,1.2
600,610,1.85 640,650,1.42 700,700,1.3 760,780,1.25 800,830,1.3 840,880,1.5 862,912,2.2 935,1095,2.2 965,1280,2 180,470,1 350,510,.9 365,500,.7`;
const parse = s => s.trim().split(/\s+/).map(p => { const [x, y, b] = p.split(',').map(Number); return [...U([x, y]), b]; });
const S = parse(stator), R = parse(rotor);

const ctx = document.getElementById('field').getContext('2d');
const img = ctx.createImageData(W, H);
for (let y = 0; y < H; y++) for (let x = 0; x < 515; x++) {
  const r = Math.hypot(x, OY - y);
  if (r > 514) continue;
  const pts = r > 323 ? S : R, soft = r > 430 ? 110 : 40;
  let sw = 0, sb = 0;
  for (const [px, py, b] of pts) {
    const d = (px - x) ** 2 + (py - y) ** 2 + soft, w = 1 / (d * d);
    sw += w; sb += w * b;
  }
  const c = palette[Math.max(0, Math.min(19, Math.floor(sb / sw * 10)))], k = (y * W + x) * 4;
  img.data[k] = c[0]; img.data[k + 1] = c[1]; img.data[k + 2] = c[2]; img.data[k + 3] = 255;
}
ctx.putImageData(img, 0, 0);

// Flux lines
ctx.strokeStyle = '#000';
ctx.lineWidth = 1;
function smooth(p) {
  ctx.beginPath();
  ctx.moveTo(...p[0]);
  for (let i = 0; i < p.length - 1; i++) {
    const a = p[i - 1] || p[i], b = p[i], c = p[i + 1], d = p[i + 2] || c;
    ctx.bezierCurveTo(b[0] + (c[0] - a[0]) / 6, b[1] + (c[1] - a[1]) / 6, c[0] - (d[0] - b[0]) / 6, c[1] - (d[1] - b[1]) / 6, c[0], c[1]);
  }
  ctx.stroke();
}
const polar = (r, deg, v = 0) => {
  const t = deg * Math.PI / 180;
  return [r * Math.cos(t) - v * Math.sin(t), OY - r * Math.sin(t) - v * Math.cos(t)];
};
const tooth = (deg, v, out) => {
  const p = [polar(326, deg, v * .75), polar(345, deg, v * .9), polar(385, deg, v), polar(414, deg, v * 1.1)];
  return out ? p : p.reverse();
};
for (let i = 0; i < 19; i++) {
  let p;
  if (i < 4) p = [[4 + i * 3, 143], [3 + i * 3, 100], [3 + i * 3.2, 58], polar(452 - i * 5, 88 - i * .6), polar(490 - i * 12.5, 80), polar(497 - i * 8, 75), polar(503 - i * 6, 70)];
  else if (i < 10) p = [...tooth(80, 11 - (i - 4) * 4.4, true), polar(446 - (i - 4) * 2.2, 78.5 - (i - 4) * .5), polar(465 - (i - 4) * 5.2, 75), polar(479 - (i - 4) * 5.8, 70)];
  else if (i < 16) p = [...tooth(70, 11 - (i - 10) * 4.4, true), polar(440 - (i - 10) * 1.8, 68 - (i - 10) * .4)];
  else p = [...tooth(60, 10 - (i - 16) * 3, true), polar(434 - (i - 16), 58.5)];
  if (i < 16) p.push(polar(508 - 4.9 * i, 65), polar(509 - 4.5 * i, 60));
  [55, 50, 45, 40].forEach(a => p.push(polar(510 - 4.35 * i, a)));
  if (i < 18) p.push(polar(508 - 4.5 * i, 35));
  if (i < 12) p.push(polar(503 - 5 * i, 30), polar(500 - 6.1 * i, 25));
  if (i < 7) p.push(polar(498 - 7.4 * i, 20), polar(498 - 10.5 * i, 15), polar(484 - 8 * i, 9.500 + i * .2), ...tooth(10, -11 + i * 3.6, false));
  else if (i < 12) p.push(polar(444 - (i - 7) * 2.8, 20 + (i - 7) * .4), ...tooth(20, -11 + (i - 7) * 5.5, false));
  else if (i < 18) p.push(polar(442 - (i - 12) * 2, 30 + (i - 12) * .4), ...tooth(30, -11 + (i - 12) * 4.4, false));
  else p.push(polar(430, 39), ...tooth(40, 4, false));
  smooth(p);
}
function bundle(n, rows) {
  for (let i = 0; i < n; i++) {
    const t = (i + .5) / n;
    smooth(rows.map(([a, b, c, d]) => U([a + (c - a) * t, b + (d - b) * t])));
  }
}
bundle(5, [[133,460,178,460],[135,600,183,600],[136,720,200,700],[145,860,235,860],[200,985,275,930],[325,1035,350,1005],[405,1115,440,1095],[455,1220,530,1205],[500,1300,600,1258],[600,1345,720,1285],[800,1340,860,1303],[965,1340,960,1312]]);
bundle(9, [[256,470,350,485],[270,560,368,560],[310,680,410,670],[355,780,465,775],[425,895,540,870],[515,1005,625,955],[615,1095,720,1030],[735,1165,820,1085],[850,1195,905,1115],[960,1228,945,1110]]);
bundle(8, [[440,530,530,570],[480,635,562,645],[525,715,625,730],[585,800,675,785],[675,900,745,855],[755,968,810,905],[840,1010,860,925],[925,1045,890,950]]);
bundle(3, [[590,608,625,625],[685,725,705,690],[765,800,785,765],[840,885,860,860]]);
bundle(2, [[1000,1328,1000,1350],[1180,1328,1180,1350],[1260,1305,1250,1340],[1340,1305,1290,1346],[1408,1358,1320,1358]]);
bundle(1, [[133,890,133,890],[150,945,150,945],[210,1000,210,1000],[250,1010,250,1010]]);
```
